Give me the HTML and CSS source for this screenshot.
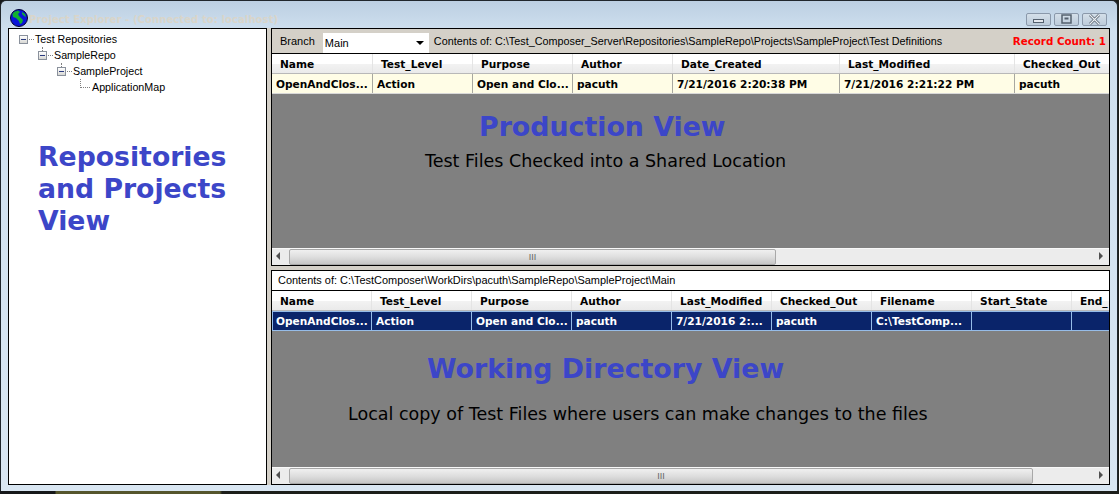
FILE: index.html
```html
<!DOCTYPE html>
<html lang="en">
    <head>
        <meta charset="utf-8" />
        <title>Project Explorer</title>
        <link rel="stylesheet" href="styles.css">
    </head>
    <body>
        <div class="window">
            <div class="titlebar">
                <svg class="globe" width="18" height="18" viewBox="0 0 18 18">
                    <circle cx="9" cy="9" r="8.5" fill="#0a14d8" stroke="#000030" stroke-width="1"/>
                    <path d="M4 3 L8 1.5 L10 3 L8 5 L9 7 L11 9 L13 11 L12 14 L10 15 L9 12 L6 9 L3 8 L2.5 5 Z" fill="#10b030"/>
                    <path d="M12 3 L15 5 L16 8 L14 7 L12 5 Z" fill="#10b030"/>
                </svg>
                <span class="title">Project Explorer - (Connected to: localhost)</span>
                <div class="win-buttons">
                    <div class="win-btn"><svg width="23" height="11" viewBox="0 0 23 11"><rect x="6.5" y="5.5" width="10" height="3" fill="#e4e8ee" stroke="#54606e"/></svg></div>
                    <div class="win-btn"><svg width="23" height="11" viewBox="0 0 23 11"><rect x="7" y="1" width="9" height="8" fill="none" stroke="#54606e" stroke-width="1.5"/><rect x="9.5" y="3.5" width="4" height="2" fill="#54606e"/></svg></div>
                    <div class="win-btn"><svg width="23" height="11" viewBox="0 0 23 11"><path d="M7 1 L16 10 M16 1 L7 10" stroke="#54606e" stroke-width="2.6"/><path d="M7 1 L16 10 M16 1 L7 10" stroke="#eef1f5" stroke-width="1.1"/></svg></div>
                </div>
            </div>
            <div class="client">
                <div class="tree-pane">
                    <div class="tree">
                        <div class="tree-row lvl0"><span class="expander"></span><span class="dots"></span>Test Repositories</div>
                        <div class="tree-row lvl1"><span class="expander stub"></span><span class="dots"></span>SampleRepo</div>
                        <div class="tree-row lvl2"><span class="expander stub"></span><span class="dots"></span>SampleProject</div>
                        <div class="tree-row lvl3"><span class="elbow"></span>ApplicationMap</div>
                    </div>
                    <div class="big-label">Repositories<br>and Projects<br>View</div>
                </div>
                <div class="right">
                    <div class="panel panel-top">
                        <div class="toolbar">
                            <span class="branch">Branch</span>
                            <div class="combo">Main<span class="arrow"></span></div>
                            <span class="contents">Contents of: C:\Test_Composer_Server\Repositories\SampleRepo\Projects\SampleProject\Test Definitions</span>
                            <span class="count">Record Count: 1</span>
                        </div>
                        <div class="grid grid-prod">
                            <div class="cols head"><div>Name</div><div>Test_Level</div><div>Purpose</div><div>Author</div><div>Date_Created</div><div>Last_Modified</div><div>Checked_Out</div></div>
                            <div class="cols row cream"><div>OpenAndClos...</div><div>Action</div><div>Open and Clo...</div><div>pacuth</div><div>7/21/2016 2:20:38 PM</div><div>7/21/2016 2:21:22 PM</div><div>pacuth</div></div>
                            <div class="gray gray-prod">
                                <h2 class="view-title prod-title">Production View</h2>
                                <p class="view-sub prod-sub">Test Files Checked into a Shared Location</p>
                            </div>
                            <div class="scrollbar">
                                <span class="sb-arrow left"></span>
                                <div class="thumb thumb-prod"><span class="grip">III</span></div>
                                <span class="sb-arrow right"></span>
                            </div>
                        </div>
                    </div>
                    <div class="panel panel-bottom">
                        <div class="pathbar">Contents of: C:\TestComposer\WorkDirs\pacuth\SampleRepo\SampleProject\Main</div>
                        <div class="grid grid-work">
                            <div class="cols head"><div>Name</div><div>Test_Level</div><div>Purpose</div><div>Author</div><div>Last_Modified</div><div>Checked_Out</div><div>Filename</div><div>Start_State</div><div>End_</div></div>
                            <div class="cols row selected"><div>OpenAndClos...</div><div>Action</div><div>Open and Clo...</div><div>pacuth</div><div>7/21/2016 2:...</div><div>pacuth</div><div>C:\TestComp...</div><div></div><div></div></div>
                            <div class="gray gray-work">
                                <h2 class="view-title work-title">Working Directory View</h2>
                                <p class="view-sub work-sub">Local copy of Test Files where users can make changes to the files</p>
                            </div>
                            <div class="scrollbar">
                                <span class="sb-arrow left"></span>
                                <div class="thumb thumb-work"><span class="grip">III</span></div>
                                <span class="sb-arrow right"></span>
                            </div>
                        </div>
                    </div>
                </div>
            </div>
        </div>
    </body>
</html>
```

FILE: styles.css
```css
html, body {
    margin: 0;
    height: 100%;
    background: linear-gradient(90deg, #16181a 55px, #55552c 56px, #55552c 220px, #1c1e1a 222px);
    overflow: hidden;
}
.window {
    width: 1118px;
    height: 491px;
    box-sizing: border-box;
    border: 1px solid #20262c;
    border-bottom: none;
    border-radius: 6px 6px 0 0;
    background: linear-gradient(#bccfe2, #cfe0ef 30px, #d9e6f2);
    display: flex;
    flex-direction: column;
    font-family: "Liberation Sans", Arial, sans-serif;
    font-size: 11px;
    color: #000;
}
.titlebar {
    height: 27px;
    flex: none;
    display: flex;
    align-items: center;
    padding: 0 10px 0 9px;
}
.globe {
    margin-top: 7px;
    flex: none;
}
.title {
    font-family: "DejaVu Sans", Verdana, sans-serif;
    font-size: 10px;
    font-weight: bold;
    letter-spacing: 0.1px;
    color: #d9d5c9;
    margin-left: 1px;
    margin-top: 10px;
}
.win-buttons {
    margin-left: auto;
    display: flex;
    gap: 3px;
    margin-top: 9px;
}
.win-btn {
    width: 23px;
    height: 11px;
    border: 1px solid #8a98aa;
    border-radius: 2px;
    background: linear-gradient(#d4dfe9, #bccbda);
    display: flex;
}
.win-btn svg {
    flex: none;
}
.client {
    flex: none;
    height: 457px;
    margin: 0 7px;
    display: flex;
    gap: 4px;
    background: #d4d0c8;
}
.tree-pane {
    width: 259px;
    box-sizing: border-box;
    border: 1px solid #000;
    background: #fff;
    flex: none;
}
.tree {
    padding-top: 2px;
}
.tree-row {
    height: 16px;
    display: flex;
    align-items: center;
    font-size: 10.7px;
    white-space: nowrap;
}
.lvl0 { padding-left: 10px; }
.lvl1 { padding-left: 29px; }
.lvl2 { padding-left: 48px; }
.lvl3 { padding-left: 71px; }
.expander {
    width: 7px;
    height: 7px;
    border: 1px solid #8a919c;
    background: linear-gradient(#fff, #d8d8d4);
    flex: none;
    display: flex;
    align-items: center;
    justify-content: center;
}
/* minus sign in the box */
.expander::after {
    content: "";
    width: 5px;
    height: 1px;
    background: #2a3a80;
}
.stub {
    position: relative;
}
/* dotted link up to the parent */
.stub::before {
    content: "";
    position: absolute;
    left: 3px;
    top: -5px;
    height: 4px;
    border-left: 1px dotted #808080;
}
.dots {
    width: 5px;
    margin: 0 1px;
    border-top: 1px dotted #808080;
    flex: none;
}
.elbow {
    width: 9px;
    height: 8px;
    margin: -8px 2px 0 0;
    border-left: 1px dotted #808080;
    border-bottom: 1px dotted #808080;
    flex: none;
}
.big-label {
    margin: 46px 0 0 29px;
    font-family: "DejaVu Sans", Verdana, sans-serif;
    font-weight: bold;
    font-size: 26.7px;
    line-height: 32px;
    color: #3c46c8;
}
.right {
    flex: 1;
    min-width: 0;
    display: flex;
    flex-direction: column;
    gap: 4px;
}
.panel {
    border: 1px solid #000;
    box-sizing: border-box;
    display: flex;
    flex-direction: column;
    min-height: 0;
}
.panel-top { height: 238px; }
.panel-bottom { height: 215px; }
.toolbar {
    height: 24px;
    flex: none;
    display: flex;
    align-items: center;
    background: #d4d0c8;
    border-bottom: 1px solid #000;
    white-space: nowrap;
}
.branch {
    margin-left: 8px;
}
.combo {
    width: 106px;
    height: 20px;
    margin-left: 8px;
    box-sizing: border-box;
    padding-left: 2px;
    background: #fff;
    display: flex;
    align-items: center;
    justify-content: space-between;
    align-self: flex-end;
}
.arrow {
    width: 0;
    height: 0;
    margin-right: 5px;
    border: 4px solid transparent;
    border-top: 4px solid #000;
    border-bottom: none;
}
.contents {
    margin-left: 5px;
    font-size: 10.8px;
}
.count {
    margin-left: auto;
    margin-right: 3px;
    font-family: "DejaVu Sans", Verdana, sans-serif;
    font-weight: bold;
    font-size: 10.3px;
    color: #f00;
}
.pathbar {
    height: 20px;
    flex: none;
    box-sizing: border-box;
    padding: 0 0 2px 6px;
    background: #fff;
    display: flex;
    align-items: center;
    border-bottom: 1px solid #000;
    font-size: 10.95px;
}
.grid {
    flex: 1;
    min-height: 0;
    display: flex;
    flex-direction: column;
    overflow: hidden;
}
.cols {
    display: grid;
    flex: none;
    font-family: "DejaVu Sans", Verdana, sans-serif;
    font-weight: bold;
    font-size: 10.6px;
    white-space: nowrap;
}
.grid-prod .cols {
    grid-template-columns: 101px 100px 100px 100px 167px 175px 95px;
}
.grid-work .cols {
    grid-template-columns: 100px 100px 100px 100px 100px 100px 100px 100px 60px;
}
.head {
    height: 20px;
    background: linear-gradient(#fff, #fff 50%, #f2f2f2 55%, #eaeaea);
    border-bottom: 1px solid #b8b8b8;
    box-sizing: border-box;
}
.head > div {
    padding-left: 8px;
    line-height: 21px;
    border-right: 1px solid #e4e4e4;
    overflow: hidden;
}
.row {
    height: 20px;
    box-sizing: border-box;
}
.row > div {
    padding-left: 4px;
    line-height: 21px;
    border-right: 1px solid;
    overflow: hidden;
}
.cream {
    background: #fffde6;
    border-bottom: 1px solid #d8d8d8;
}
.cream > div {
    border-color: #a8a8a0;
}
.selected {
    background: #0a246a;
    color: #fff;
    border-top: 1px solid #96bce8;
    border-bottom: 1px solid #96bce8;
}
.selected > div {
    border-color: #96bce8;
    line-height: 19px;
}
.selected > div:first-child {
    border-left: 1px solid #96bce8;
    padding-left: 3px;
}
.gray {
    flex: 1;
    min-height: 0;
    background: #808080;
    overflow: hidden;
}
.view-title {
    margin: 0;
    font-family: "DejaVu Sans", Verdana, sans-serif;
    font-weight: bold;
    font-size: 26.8px;
    line-height: 32px;
    color: #3c46c8;
}
.view-sub {
    margin: 0;
    font-family: "DejaVu Sans", Verdana, sans-serif;
    font-size: 17.5px;
    line-height: 20px;
    color: #000;
}
.prod-title { margin: 17px 0 0 207px; }
.prod-sub { margin: 8px 0 0 153px; }
.work-title { margin: 22px 0 0 155px; }
.work-sub { margin: 19px 0 0 76px; }
.scrollbar {
    height: 16px;
    flex: none;
    display: flex;
    align-items: stretch;
    background: #ececec;
    border-top: 1px solid #f8f8f8;
}
.sb-arrow {
    flex: none;
    width: 17px;
    position: relative;
}
.sb-arrow::after {
    content: "";
    position: absolute;
    top: 3px;
    border: 4px solid transparent;
}
.sb-arrow.left::after {
    left: 4px;
    border-right: 4px solid #505050;
    border-left: none;
}
.sb-arrow.right {
    margin-left: auto;
}
.sb-arrow.right::after {
    right: 6px;
    border-left: 4px solid #505050;
    border-right: none;
}
.thumb {
    box-sizing: border-box;
    display: flex;
    align-items: center;
    justify-content: center;
    background: linear-gradient(#f0f0f0, #dedede 50%, #c6c6c6);
    border: 1px solid #a8a8a8;
    border-radius: 2px;
    color: #666;
    font-size: 9px;
}
.thumb-prod { width: 487px; }
.thumb-work { width: 744px; }
```
